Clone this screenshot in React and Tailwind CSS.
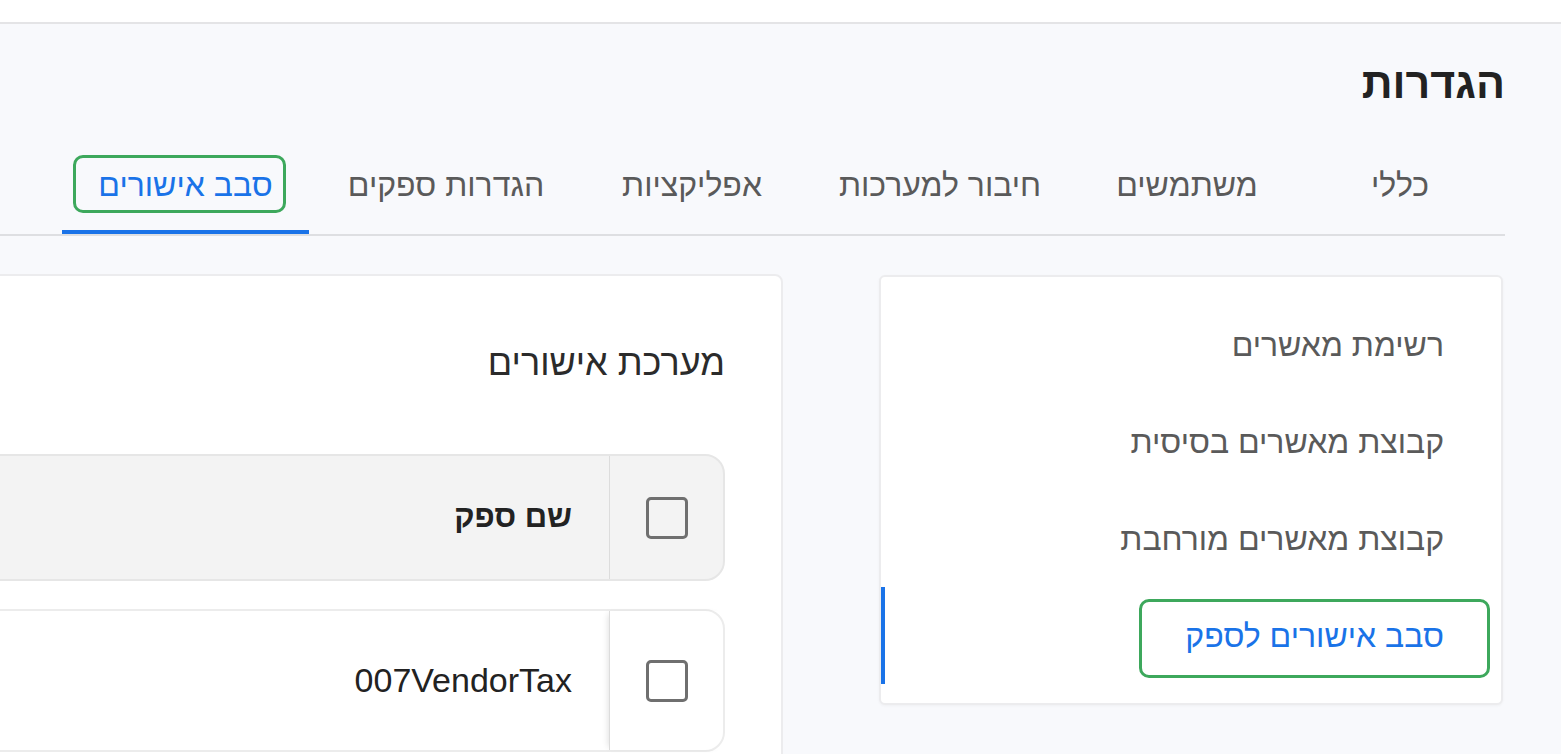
import React from "react";

const tabs = [
  { label: "כללי", w: "w-[210px]" },
  { label: "משתמשים", w: "w-[216px]" },
  { label: "חיבור למערכות", w: "w-[278px]" },
  { label: "אפליקציות", w: "w-[218px]" },
  { label: "הגדרות ספקים", w: "w-[274px]" },
  { label: "סבב אישורים", w: "w-[247px]", active: true },
];

const menu = ["רשימת מאשרים", "קבוצת מאשרים בסיסית", "קבוצת מאשרים מורחבת", "סבב אישורים לספק"];

const Checkbox = () => (
  <div className="w-[42px] h-[42px] rounded-[5px] border-[3px] border-[#6f6f6f]" />
);

export default function App() {
  return (
    <div
      dir="rtl"
      className="w-full h-[754px] overflow-hidden bg-[#f8f9fc] text-[#222]"
      style={{ fontFamily: '"Liberation Sans", Arial, sans-serif' }}
    >
      {/* top bar */}
      <div className="h-[24px] bg-white border-b-2 border-[#e4e4e6]" />

      <div className="pr-[56px] -ml-[60px]">
        {/* title */}
        <h1 className="pt-[36px] text-[43px] leading-[46px] font-bold text-[#222]">הגדרות</h1>

        {/* tabs */}
        <div className="mt-[34px] flex border-b-2 border-[#dedfe2]">
          {tabs.map((t) => (
            <div
              key={t.label}
              className={`relative h-[94px] flex items-center justify-center text-[32px] ${t.w} ${
                t.active ? "text-[#1a73e8] border-b-4 border-[#1a73e8]" : "text-[#5a5a5a] border-b-4 border-transparent"
              }`}
            >
              {t.label}
              {t.active && (
                <span className="absolute left-[11px] right-[23px] top-[15px] bottom-[17px] rounded-[10px] border-[3px] border-[#3da85c]" />
              )}
            </div>
          ))}
          <div className="flex-1" />
        </div>

        {/* body */}
        <div className="mt-[38px] flex items-start gap-[96px]">
          {/* side menu */}
          <div className="w-[624px] shrink-0 mr-[2px] mt-[1px] bg-white rounded-[6px] border-2 border-[#ececee] shadow-[0_1px_3px_rgba(0,0,0,0.04)] py-[19px]">
            {menu.map((m, i) => {
              const active = i === menu.length - 1;
              return (
                <div
                  key={m}
                  className={`relative h-[97px] flex items-center pr-[57px] text-[32px] ${
                    active ? "text-[#1a73e8] border-l-4 border-[#1a73e8]" : "text-[#5a5a5a] border-l-4 border-transparent"
                  }`}
                >
                  {m}
                  {active && (
                    <span className="absolute right-[11px] top-[12px] bottom-[6px] w-[351px] rounded-[10px] border-[3px] border-[#3da85c]" />
                  )}
                </div>
              );
            })}
          </div>

          {/* main card */}
          <div className="flex-1 h-[520px] bg-white rounded-tr-[8px] border-2 border-[#ececee] pr-[56px] pt-[66px]">
            <h2 className="text-[36px] leading-[42px] font-medium text-[#2b2b2b]">מערכת אישורים</h2>

            <div className="mt-[70px] flex flex-col gap-[28px]">
              {/* header row */}
              <div className="h-[127px] flex rounded-[20px] bg-[#f3f3f3] border-2 border-[#e6e6e6]">
                <div className="w-[114px] flex items-center justify-center border-l border-[#dcdcdc]">
                  <Checkbox />
                </div>
                <div className="flex-1 flex items-center pr-[37px] text-[31px] font-bold text-[#222]">שם ספק</div>
              </div>

              {/* data row */}
              <div className="h-[143px] flex rounded-[20px] bg-white border-2 border-[#ececec]">
                <div className="relative w-[114px] flex items-center justify-center border-l border-[#dcdcdc] shadow-[-4px_0_6px_-3px_rgba(0,0,0,0.12)]">
                  <Checkbox />
                </div>
                <div className="flex-1 flex items-center pr-[37px] text-[34px] text-[#222]">007VendorTax</div>
              </div>
            </div>
          </div>
        </div>
      </div>
    </div>
  );
}
